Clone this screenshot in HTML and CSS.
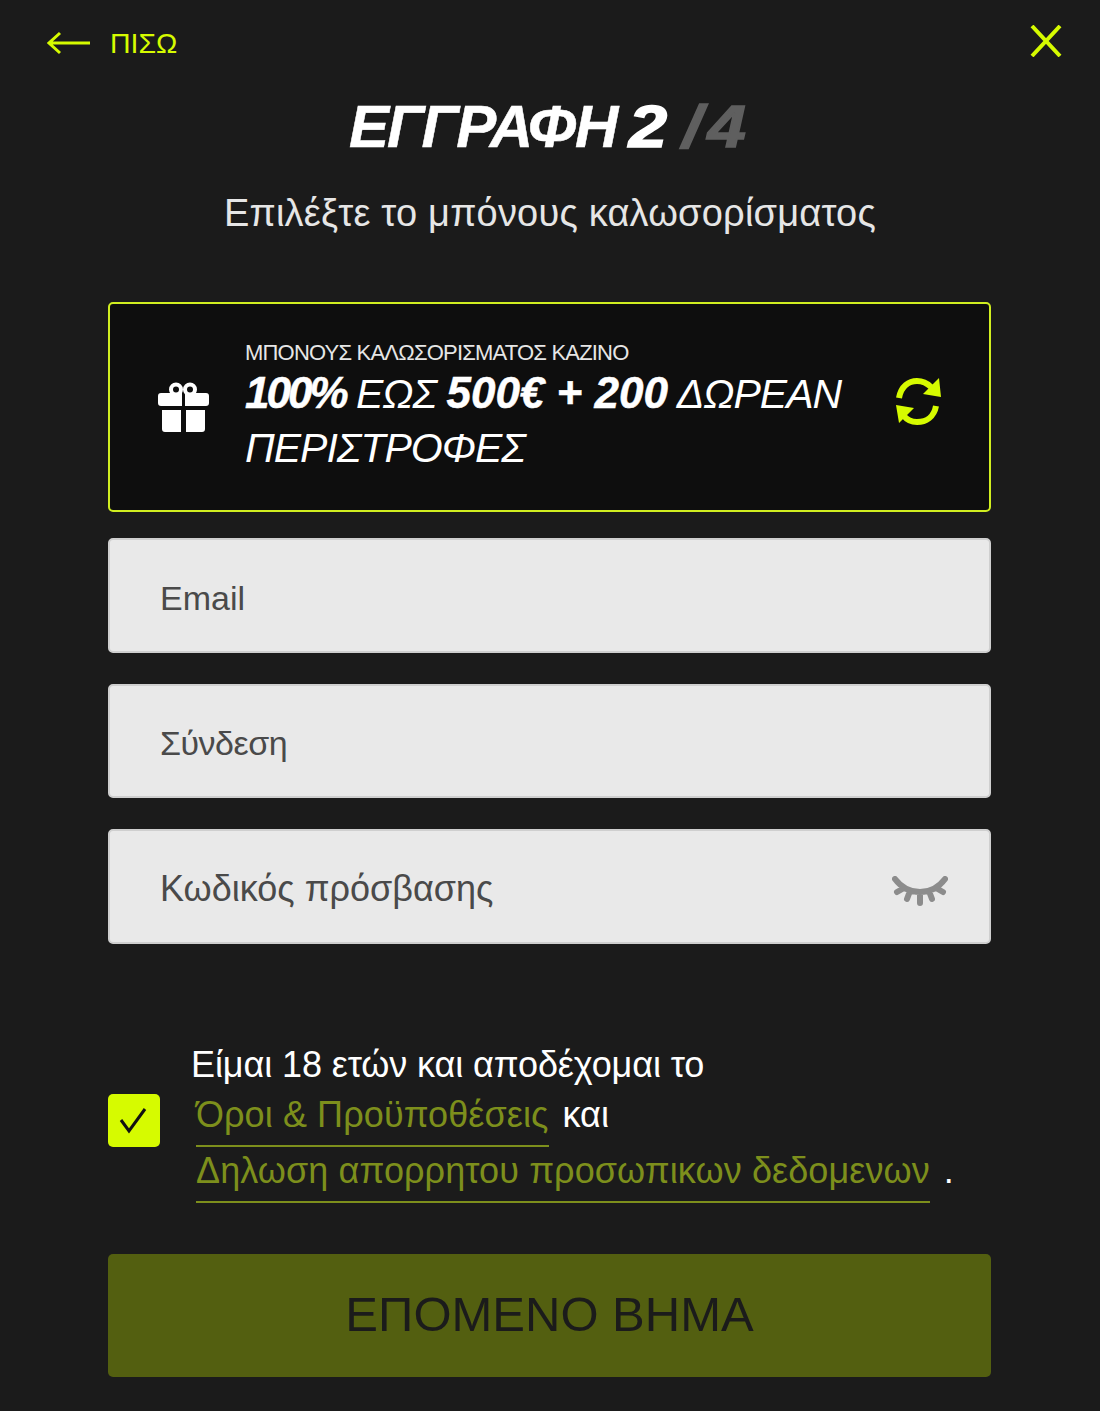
FILE: index.html
```html
<!DOCTYPE html>
<html lang="el">
<head>
    <meta charset="UTF-8">
    <meta name="viewport" content="width=device-width, initial-scale=1.0">
    <title>Εγγραφή</title>
    <link rel="stylesheet" href="styles.css">
</head>
<body>
    <div class="topbar">
        <a class="back" href="#">
            <svg class="back-icon" viewBox="0 0 44 24" width="44" height="24"><path d="M43 12H2M13 2 2 12l11 10" fill="none" stroke="currentColor" stroke-width="3"/></svg>
            <span>ΠΙΣΩ</span>
        </a>
        <svg class="close-icon" viewBox="0 0 32 32" width="32" height="32"><path d="M2 1l28 30M30 1 2 31" fill="none" stroke="currentColor" stroke-width="4"/></svg>
    </div>

    <h1 class="title">ΕΓΓΡΑΦΗ <span class="num">2</span> <span class="steps">/4</span></h1>
    <p class="subtitle">Επιλέξτε το μπόνους καλωσορίσματος</p>

    <form class="form">
        <div class="bonus">
            <svg class="gift" viewBox="18 13 51 51" width="51" height="51">
                <path fill="#fff" d="M21 24h21v13H21a3 3 0 0 1-3-3v-7a3 3 0 0 1 3-3zM45 24h21a3 3 0 0 1 3 3v7a3 3 0 0 1-3 3H45zM22 41h19v22H25a3 3 0 0 1-3-3zM46 41h19v19a3 3 0 0 1-3 3H46z"/>
                <circle cx="36" cy="20.5" r="5" fill="none" stroke="#fff" stroke-width="4"/>
                <circle cx="50" cy="20.5" r="5" fill="none" stroke="#fff" stroke-width="4"/>
            </svg>
            <div class="bonus-text">
                <div class="bonus-label">ΜΠΟΝΟΥΣ ΚΑΛΩΣΟΡΙΣΜΑΤΟΣ ΚΑΖΙΝΟ</div>
                <div class="bonus-offer"><b class="tight">100%</b> ΕΩΣ <b>500€ + 200</b> ΔΩΡΕΑΝ<br>ΠΕΡΙΣΤΡΟΦΕΣ</div>
            </div>
            <svg class="refresh" viewBox="14 10 46 48" width="46" height="48">
                <path fill="none" stroke="currentColor" stroke-width="6" d="M18 31C20 19 28 14 36 14c6 0 10 2 14 6M55 39c-2 11-10 16-19 16-6 0-10-2-13-6"/>
                <path fill="currentColor" d="M58 11l2 19-18-3zM15 38l18 3-15 15z"/>
            </svg>
        </div>

        <div class="field">Email</div>
        <div class="field login">Σύνδεση</div>
        <div class="field pass">
            <span>Κωδικός πρόσβασης</span>
            <svg class="eye" viewBox="32 26 56 30" width="56" height="30">
                <path fill="none" stroke="#8c8c8c" stroke-width="6" stroke-linecap="round" d="M35 29c6 8 14 13 25 13s19-5 25-13M44 38l-7 4M50 41l-3 8M60 43v10M69 41l3 8M76 38l7 4"/>
            </svg>
        </div>

        <div class="terms">
            <div class="checkbox">
                <svg viewBox="0 0 32 32" width="32" height="32"><path d="M3 15l8 11L27 4" fill="none" stroke="#111" stroke-width="3"/></svg>
            </div>
            <div class="terms-text">
                <div class="terms-first">Είμαι 18 ετών και αποδέχομαι το</div>
                <div class="terms-line"><a href="#">Όροι &amp; Προϋποθέσεις</a> και</div>
                <div class="terms-line"><a href="#">Δηλωση απορρητου προσωπικων δεδομενων</a> .</div>
            </div>
        </div>

        <button type="button" class="btn">ΕΠΟΜΕΝΟ ΒΗΜΑ</button>
    </form>
</body>
</html>
```

FILE: styles.css
```css
body {
    font-family: "Liberation Sans", Arial, sans-serif;
    margin: 0;
    background: #1b1b1b;
    color: #fff;
}

.topbar {
    display: flex;
    justify-content: space-between;
    align-items: flex-start;
    padding: 24px 38px 0 47px;
    color: #d6fb00;
}

.back {
    display: flex;
    align-items: center;
    gap: 19px;
    padding-top: 2px;
    color: #d6fb00;
    text-decoration: none;
    font-size: 28.5px;
    line-height: 34px;
}

.close-icon {
    display: block;
    margin-top: 1px;
}

.title {
    margin: 31px 0 0;
    text-align: center;
    font-size: 60px;
    line-height: 72px;
    font-style: italic;
    font-weight: bold;
    letter-spacing: -2px;
    word-spacing: -3px;
    -webkit-text-stroke: 0.5px #fff;
}

.num {
    display: inline-block;
    margin: 0 3px;
    transform: scaleX(1.15);
    -webkit-text-stroke: 1.5px #fff;
}

.steps {
    display: inline-block;
    margin: 0 4px 0 10px;
    transform: scaleX(1.15);
    color: #5f5f5f;
    letter-spacing: 5px;
    -webkit-text-stroke: 1.5px #5f5f5f;
}

.subtitle {
    margin: 28px 0 0;
    text-align: center;
    font-size: 38px;
    line-height: 44px;
    color: #e6e6e6;
    letter-spacing: 0.2px;
}

.form {
    margin: 67px 109px 0 108px;
}

.bonus {
    display: flex;
    align-items: center;
    box-sizing: border-box;
    height: 210px;
    background: #0e0e0e;
    border: 2px solid #d0ee20;
    border-radius: 5px;
    padding: 0 48px;
    margin-bottom: 26px;
}

.gift {
    flex: none;
    margin-right: 36px;
}

.bonus-text {
    flex: 1;
}

.bonus-label {
    font-size: 22px;
    line-height: 26px;
    letter-spacing: -0.8px;
    color: #e6e6e6;
}

.bonus-offer {
    font-size: 41px;
    line-height: 54px;
    font-style: italic;
    letter-spacing: -1px;
}

.bonus-offer b {
    font-size: 44px;
    letter-spacing: 0;
    -webkit-text-stroke: 0.5px #fff;
}

.bonus-offer b.tight {
    letter-spacing: -3px;
}

.refresh {
    flex: none;
    margin-bottom: 12px;
    color: #d6fb00;
}

.field {
    display: flex;
    align-items: center;
    justify-content: space-between;
    box-sizing: border-box;
    height: 114.5px;
    margin-bottom: 31px;
    padding: 6px 41px 0 50px;
    background: #e9e9e9;
    border: 2px solid #cfcfcf;
    border-radius: 5px;
    color: #4a4a4a;
    font-size: 34px;
}

.login {
    letter-spacing: -0.5px;
}

.pass {
    font-size: 36px;
}

.eye {
    margin-top: 3px;
}

.terms {
    display: flex;
    align-items: center;
    margin-top: 99px;
}

.checkbox {
    flex: none;
    display: flex;
    align-items: center;
    justify-content: center;
    width: 52px;
    height: 53px;
    margin-right: 31px;
    margin-bottom: 4px;
    background: #d6fb00;
    border-radius: 5px;
}

.terms-text {
    font-size: 36px;
}

.terms-first {
    line-height: 44px;
    letter-spacing: -0.1px;
}

.terms-line {
    margin-left: 5px;
    line-height: 55px;
}

.terms-line + .terms-line {
    margin-top: -4px;
}

.terms-line a {
    display: inline-block;
    margin-right: 4px;
    padding-bottom: 2px;
    color: #7d8f1c;
    letter-spacing: 0.1px;
    text-decoration: none;
    border-bottom: 2px solid #7d8f1c;
    line-height: 56px;
}

.btn {
    display: block;
    width: 100%;
    height: 123px;
    margin-top: 51px;
    padding: 0 0 2px;
    background: #535f10;
    border: none;
    border-radius: 5px;
    color: #1b1b1b;
    font-family: inherit;
    font-size: 49px;
    cursor: pointer;
}
```
